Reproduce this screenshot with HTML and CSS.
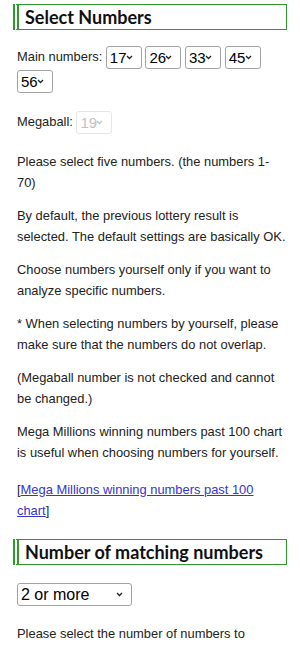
FILE: index.html
```html
<!DOCTYPE html>
<html lang="en">
<head>
  <meta charset="UTF-8">
  <meta name="viewport" content="width=device-width, initial-scale=1.0">
  <title>Select Numbers</title>
  <link rel="stylesheet" href="styles.css">
</head>
<body>
  <div class="content">
    <h2 class="section-title first">Select Numbers</h2>
    <p class="pick-row">
      Main numbers:
      <select class="num"><option>17</option></select>
      <select class="num"><option>26</option></select>
      <select class="num"><option>33</option></select>
      <select class="num"><option>45</option></select>
      <select class="num"><option>56</option></select>
    </p>
    <p class="pick-row">
      Megaball:
      <select class="num" disabled><option>19</option></select>
    </p>
    <p>Please select five numbers. (the numbers 1-70)</p>
    <p>By default, the previous lottery result is selected. The default settings are basically OK.</p>
    <p>Choose numbers yourself only if you want to analyze specific numbers.</p>
    <p>* When selecting numbers by yourself, please make sure that the numbers do not overlap.</p>
    <p>(Megaball number is not checked and cannot be changed.)</p>
    <p>Mega Millions winning numbers past 100 chart is useful when choosing numbers for yourself.</p>
    <p class="chart-link">[<a href="#">Mega Millions winning numbers past 100 chart</a>]</p>

    <h2 class="section-title">Number of matching numbers</h2>
    <p class="pick-row">
      <select class="match">
        <option>2 or more</option>
        <option>3 or more</option>
        <option>4 or more</option>
        <option>5</option>
      </select>
    </p>
    <p>Please select the number of numbers to compare.</p>
  </div>
</body>
</html>
```

FILE: styles.css
```css
body {
  margin: 0;
  background: #fff;
  color: #222;
  font-family: "Liberation Sans", Arial, sans-serif;
  font-size: 12.9px;
  line-height: 21px;
}
.content {
  padding: 0 13px;
}
.section-title {
  margin: 18px 0 17px;
  padding: 0 0 0 6px;
  font-family: Lato, "Noto Sans", sans-serif;
  font-size: 18px;
  line-height: 24px;
  font-weight: bold;
  color: #111;
  border: 1px solid #2e9a2e;
  border-left: 6px double #2e9a2e;
}
.section-title.first {
  margin: 4px 0 15px;
}
p {
  margin: 0 0 12px;
  padding-left: 4px;
}
.pick-row {
  margin-bottom: 17px;
  line-height: 23px;
}
select {
  -webkit-appearance: none;
  appearance: none;
  height: 23px;
  margin: 0;
  padding: 0 0 0 3px;
  border: 1px solid #a3a3a3;
  border-radius: 3px;
  background: #fff url("data:image/svg+xml,%3Csvg xmlns='http://www.w3.org/2000/svg' width='7' height='5' viewBox='0 0 7 5'%3E%3Cpath d='M1 1l2.5 2.5L6 1' fill='none' stroke='%23222' stroke-width='1.3'/%3E%3C/svg%3E") no-repeat right 8px center;
  font-family: "Liberation Sans", Arial, sans-serif;
  font-size: 15px;
  color: #000;
  vertical-align: middle;
}
select:disabled {
  color: #a8a8a8;
  border-color: #dcdcdc;
  background-image: url("data:image/svg+xml,%3Csvg xmlns='http://www.w3.org/2000/svg' width='7' height='5' viewBox='0 0 7 5'%3E%3Cpath d='M1 1l2.5 2.5L6 1' fill='none' stroke='%23aaa' stroke-width='1.3'/%3E%3C/svg%3E");
}
.num {
  width: 36px;
}
.match {
  width: 115px;
  font-size: 16px;
}
.chart-link {
  margin-top: 16px;
}
a {
  color: #3434cf;
}
```
